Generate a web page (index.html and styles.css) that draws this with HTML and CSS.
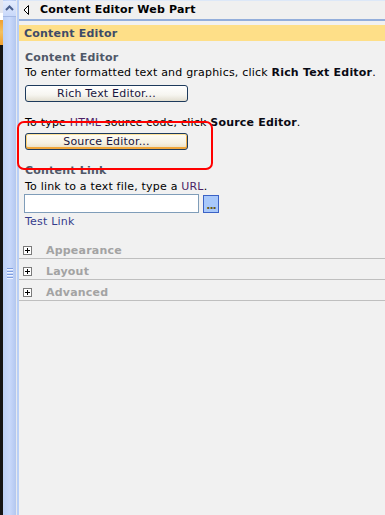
FILE: index.html
```html
<!DOCTYPE html>
<html>
<head>
<meta charset="utf-8">
<title>Content Editor Web Part</title>
<link rel="stylesheet" href="styles.css">
</head>
<body>
<div class="page">
  <div class="edge"></div>
  <div class="rail">
    <div class="up">
      <svg width="13" height="15" viewBox="0 0 13 15"><path d="M3 9 L6.5 5.5 L10 9" fill="none" stroke="#4a5f8c" stroke-width="2"/></svg>
    </div>
    <div class="grip"><i></i><i></i><i></i><i></i></div>
  </div>
  <div class="divider"></div>
  <div class="panel">
    <div class="head">
      <svg class="tri" width="7" height="10" viewBox="0 0 7 10"><path d="M5.5 0.5 L1 5 L5.5 9.5 Z" fill="#fff" stroke="#000" stroke-width="1"/></svg>
      <span>Content Editor Web Part</span>
    </div>
    <div class="group-title">Content Editor</div>
    <div class="body">
      <h3 class="sub">Content Editor</h3>
      <p class="txt">To enter formatted text and graphics, click <b>Rich Text Editor</b>.</p>
      <button class="btn">Rich Text Editor...</button>
      <p class="txt gap">To type <span class="abbr">HTML</span> source code, click <b>Source Editor</b>.</p>
      <button class="btn btn-focus">Source Editor...</button>
      <h3 class="sub gap">Content Link</h3>
      <p class="txt tight">To link to a text file, type a <span class="abbr">URL</span>.</p>
      <div class="urlrow">
        <input class="url" type="text">
        <button class="dots">...</button>
      </div>
      <a class="link" href="#">Test Link</a>
    </div>
    <div class="sections">
      <div class="row"><span class="plus"></span><span class="label">Appearance</span></div>
      <div class="row"><span class="plus"></span><span class="label">Layout</span></div>
      <div class="row"><span class="plus"></span><span class="label">Advanced</span></div>
    </div>
  </div>
  <div class="annot"></div>
</div>
</body>
</html>
```

FILE: styles.css
```css
html, body {
  margin: 0;
  padding: 0;
  height: 100%;
}
body {
  font-family: "DejaVu Sans", Verdana, sans-serif;
  font-size: 11px;
  letter-spacing: 0.2px;
  color: #000;
  background: #f1f1f1;
}
.page {
  position: relative;
  display: flex;
  height: 515px;
  overflow: hidden;
}
.edge {
  width: 3px;
  flex: none;
  background: linear-gradient(#e4e6ee 0, #e4e6ee 13px, #ffffff 13px, #ffffff 20px, #f0a030 20px, #f4c060 32px, #f0a030 45px, #151515 45px);
}
.rail {
  width: 13px;
  flex: none;
  background: linear-gradient(90deg, #bcd0f6, #c9d9fb 50%, #b3c7ef);
  display: flex;
  flex-direction: column;
}
.up {
  height: 15px;
  margin-top: 1px;
  background: linear-gradient(#e4ecfd, #c8d8fa);
  border-bottom: 1px solid #a4b8e4;
  display: flex;
  justify-content: center;
}
.grip {
  margin: 251px auto 0;
  width: 6px;
  display: flex;
  flex-direction: column;
  gap: 1px;
}
.grip i {
  display: block;
  height: 1px;
  background: #7f9ee0;
  border-bottom: 1px solid #eef3ff;
}
.divider {
  width: 1px;
  flex: none;
  background: #e6e9ef;
  border-right: 2px solid #b9cff6;
}
.panel {
  flex: 1;
  background: #f1f1f1;
  display: flex;
  flex-direction: column;
}
.head {
  border-top: 1px solid #dde8f8;
  border-bottom: 2px solid #93aedb;
  background: #f0f0f0;
  display: flex;
  align-items: center;
  padding: 0 0 1px 4px;
  font-weight: bold;
  line-height: 16px;
  height: 17px;
}
.tri {
  margin-right: 10px;
}
.group-title {
  margin-top: 4px;
  height: 16px;
  line-height: 17px;
  background: #fedf88;
  padding-left: 5px;
  font-weight: bold;
  color: #3d4b68;
}
.body {
  padding: 9px 0 0 6px;
  display: flex;
  flex-direction: column;
  align-items: flex-start;
}
.sub {
  margin: 0;
  font-size: 11px;
  line-height: 15px;
  font-weight: bold;
  color: #4f5868;
}
.txt {
  margin: 0;
  line-height: 15px;
}
.txt b {
  color: #0a0a14;
}
.abbr {
  color: #4c1f66;
}
.gap {
  margin-top: 13px;
}
.tight {
  margin-top: 1px;
}
.btn {
  font-family: "DejaVu Sans", Verdana, sans-serif;
  font-size: 11px;
  letter-spacing: 0.2px;
  color: #1a1540;
  width: 163px;
  height: 17px;
  margin-top: 5px;
  padding: 0;
  border: 1px solid #1d3a5c;
  border-radius: 3px;
  background: linear-gradient(#ffffff, #f6f5f0 60%, #e2ded0);
  line-height: 15px;
}
.btn-focus {
  margin-top: 3px;
  background: linear-gradient(#fffdf6, #f5f1e2 60%, #e8dcbc);
  box-shadow: inset 0 1px 0 #ffe39a, inset 0 -2px 0 #f0a63a, inset 1px 0 0 #fcd078, inset -1px 0 0 #f2b24c;
}
.urlrow {
  display: flex;
  margin-top: 0;
  margin-left: -1px;
}
.url {
  width: 175px;
  height: 19px;
  box-sizing: border-box;
  border: 1px solid #7f9db9;
  background: #fff;
  margin: 0;
  padding: 0;
}
.dots {
  margin: 1px 0 0 4px;
  width: 16px;
  height: 18px;
  box-sizing: border-box;
  border: 1px solid #3b62c6;
  background: #a8c8fa;
  padding: 0;
  font-family: "DejaVu Sans", Verdana, sans-serif;
  font-size: 11px;
  font-weight: bold;
  color: #6a5a18;
  line-height: 20px;
  letter-spacing: -1px;
}
.link {
  padding-top: 1px;
  line-height: 15px;
  color: #353c8c;
  text-decoration: none;
}
.sections {
  margin-top: 9px;
}
.row {
  height: 21px;
  box-sizing: border-box;
  padding-top: 5px;
  border-bottom: 1px solid #bfbfbf;
  display: flex;
  align-items: flex-start;
  line-height: 15px;
}
.plus {
  position: relative;
  width: 9px;
  height: 9px;
  box-sizing: border-box;
  margin: 3px 0 0 4px;
  border: 1px solid #7a7a7a;
  background: #fff;
}
.plus::before, .plus::after {
  content: "";
  position: absolute;
  background: #000;
}
.plus::before {
  left: 1px;
  top: 3px;
  width: 5px;
  height: 1px;
}
.plus::after {
  left: 3px;
  top: 1px;
  width: 1px;
  height: 5px;
}
.label {
  margin-left: 14px;
  font-weight: bold;
  color: #a3a3a3;
}
.annot {
  position: absolute;
  left: 17px;
  top: 121px;
  width: 196px;
  height: 49px;
  box-sizing: border-box;
  border: 2px solid #ff0000;
  border-radius: 7px;
  pointer-events: none;
}
```
